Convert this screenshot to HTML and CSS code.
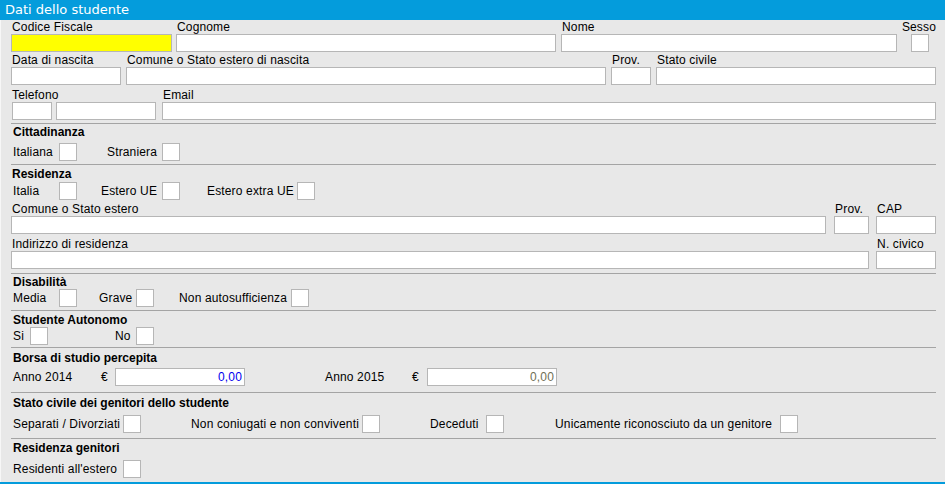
FILE: index.html
```html
<!DOCTYPE html>
<html lang="it">
<head>
<meta charset="utf-8">
<title>Dati dello studente</title>
<link rel="stylesheet" href="styles.css">
</head>
<body>
<div class="panel">
  <div class="header">Dati dello studente</div>
  <div class="body">
    <div class="top">
      <div class="fields r1">
        <div class="field w161"><span class="lbl">Codice Fiscale</span><input class="in yellow" type="text"></div>
        <div class="field w380 ml4"><span class="lbl">Cognome</span><input class="in" type="text"></div>
        <div class="field w336 ml5"><span class="lbl">Nome</span><input class="in" type="text"></div>
        <div class="field w35 ml4 sesso"><span class="lbl">Sesso</span><input class="in sq" type="text"></div>
      </div>
      <div class="fields r2">
        <div class="field w110"><span class="lbl">Data di nascita</span><input class="in" type="text"></div>
        <div class="field w480 ml5"><span class="lbl">Comune o Stato estero di nascita</span><input class="in" type="text"></div>
        <div class="field w40 ml5"><span class="lbl">Prov.</span><input class="in" type="text"></div>
        <div class="field w280 ml5"><span class="lbl">Stato civile</span><input class="in" type="text"></div>
      </div>
      <div class="fields r3">
        <div class="field tel">
          <span class="lbl nopad">Telefono</span>
          <div class="pair"><input class="in w40" type="text"><input class="in w100 ml4" type="text"></div>
        </div>
        <div class="field w775 ml6"><span class="lbl">Email</span><input class="in" type="text"></div>
      </div>
    </div>

    <section class="sec s-cit">
      <div class="h">Cittadinanza</div>
      <div class="opts g-cit">
        <span class="t">Italiana</span><input class="cb" type="checkbox">
        <span class="t">Straniera</span><input class="cb" type="checkbox">
      </div>
    </section>

    <section class="sec s-res">
      <div class="h h1">Residenza</div>
      <div class="opts g-res">
        <span class="t">Italia</span><input class="cb" type="checkbox">
        <span class="t">Estero UE</span><input class="cb" type="checkbox">
        <span class="t">Estero extra UE</span><input class="cb" type="checkbox">
      </div>
      <div class="fields r-com">
        <div class="field w816"><span class="lbl">Comune o Stato estero</span><input class="in" type="text"></div>
        <div class="field w35 ml8"><span class="lbl">Prov.</span><input class="in" type="text"></div>
        <div class="field w60 ml7"><span class="lbl">CAP</span><input class="in" type="text"></div>
      </div>
      <div class="fields r-ind">
        <div class="field w859"><span class="lbl">Indirizzo di residenza</span><input class="in" type="text"></div>
        <div class="field w60 ml7"><span class="lbl">N. civico</span><input class="in" type="text"></div>
      </div>
    </section>

    <section class="sec s-dis">
      <div class="h">Disabilità</div>
      <div class="opts g-dis">
        <span class="t">Media</span><input class="cb" type="checkbox">
        <span class="t">Grave</span><input class="cb" type="checkbox">
        <span class="t">Non autosufficienza</span><input class="cb" type="checkbox">
      </div>
    </section>

    <section class="sec s-aut">
      <div class="h">Studente Autonomo</div>
      <div class="opts g-aut">
        <span class="t">Si</span><input class="cb" type="checkbox">
        <span class="t">No</span><input class="cb" type="checkbox">
      </div>
    </section>

    <section class="sec s-bor">
      <div class="h">Borsa di studio percepita</div>
      <div class="opts g-bor">
        <span class="t">Anno 2014</span><span class="t">€</span><input class="in amount blue" type="text" value="0,00">
        <span class="t">Anno 2015</span><span class="t">€</span><input class="in amount olive" type="text" value="0,00">
      </div>
    </section>

    <section class="sec s-gen">
      <div class="h">Stato civile dei genitori dello studente</div>
      <div class="opts g-gen">
        <span class="t">Separati / Divorziati</span><input class="cb" type="checkbox">
        <span class="t">Non coniugati e non conviventi</span><input class="cb" type="checkbox">
        <span class="t">Deceduti</span><input class="cb" type="checkbox">
        <span class="t">Unicamente riconosciuto da un genitore</span><input class="cb" type="checkbox">
      </div>
    </section>

    <section class="sec s-rg">
      <div class="h">Residenza genitori</div>
      <div class="opts g-rg">
        <span class="t">Residenti all'estero</span><input class="cb" type="checkbox">
      </div>
    </section>
  </div>
</div>
</body>
</html>
```

FILE: styles.css
```css
* { box-sizing: border-box; }
html, body { margin: 0; padding: 0; background: #e8e8e8; }
body {
  font-family: "Liberation Sans", Arial, sans-serif;
  font-size: 12px;
  letter-spacing: 0.15px;
  color: #000;
}
.panel {
  width: 945px;
  height: 484px;
  background: #e8e8e8;
  border-bottom: 2px solid #049cdc;
  display: flex;
  flex-direction: column;
  overflow: hidden;
}
.header {
  height: 20px;
  line-height: 20px;
  background: #049cdc;
  color: #fff;
  font-family: "DejaVu Sans", sans-serif;
  font-size: 13px;
  letter-spacing: 0;
  padding-left: 5px;
  flex: none;
}
.body {
  flex: 1;
  border-left: 1px solid #f7f7f7;
  padding: 0 9px 0 10px;
}

/* text fields */
.fields { display: flex; align-items: flex-end; }
.field { display: flex; flex-direction: column; }
.lbl {
  height: 14px;
  line-height: 14px;
  padding-left: 1px;
  white-space: nowrap;
}
.lbl.nopad { padding-left: 0; }
.in {
  display: block;
  width: 100%;
  height: 18px;
  margin: 0;
  padding: 0 2px;
  border: 1px solid #b6b6b6;
  border-radius: 0;
  background: #fff;
  font: inherit;
  letter-spacing: inherit;
  outline: none;
}
.yellow { background: #ffff00; }
.sesso { align-items: flex-end; }
.sesso .lbl { padding-left: 0; }
.in.sq { width: 18px; margin-right: 7px; }
.pair { display: flex; }
.tel { margin-left: 1px; }

.r2 { margin-top: 1px; }
.r3 { margin-top: 3px; }

.w35 { width: 35px; }
.w40 { width: 40px; }
.w60 { width: 60px; }
.w100 { width: 100px; }
.w110 { width: 110px; }
.w161 { width: 161px; }
.w280 { width: 280px; }
.w336 { width: 336px; }
.w380 { width: 380px; }
.w480 { width: 480px; }
.w775 { width: 775px; }
.w816 { width: 816px; }
.w859 { width: 859px; }
.ml4 { margin-left: 4px; }
.ml5 { margin-left: 5px; }
.ml6 { margin-left: 6px; }
.ml7 { margin-left: 7px; }
.ml8 { margin-left: 8px; }

/* sections */
.top { padding-bottom: 3px; }
.sec {
  border-top: 1px solid #a4a4a4;
  width: 925px;
}
.h {
  font-weight: bold;
  height: 14px;
  line-height: 14px;
  padding-left: 2px;
  letter-spacing: 0;
}
.h.h1 { padding-left: 1px; }
.opts {
  display: grid;
  align-items: center;
  justify-items: start;
  padding-left: 2px;
  height: 18px;
}
.t { line-height: 14px; white-space: nowrap; }
.cb {
  -webkit-appearance: none;
  appearance: none;
  display: block;
  width: 18px;
  height: 18px;
  margin: 0;
  border: 1px solid #b6b6b6;
  border-radius: 0;
  background: #fff;
}

.s-cit .h { margin-top: 1px; }
.s-cit .opts { margin-top: 4px; }
.s-cit { padding-bottom: 3px; }
.g-cit { grid-template-columns: 46px 48px 55px 18px; }

.s-res .h { margin-top: 2px; }
.s-res .opts { margin-top: 1px; }
.g-res { grid-template-columns: 46px 42px 61px 45px 90px 18px; }
.r-com { margin-top: 2px; }
.r-ind { margin-top: 3px; }
.s-res { padding-bottom: 4px; }

.s-dis .h { margin-top: 1px; }
.s-dis { padding-bottom: 3px; }
.g-dis { grid-template-columns: 46px 40px 37px 43px 112px 18px; }

.s-aut .h { margin-top: 2px; }
.s-aut { padding-bottom: 2px; }
.g-aut { grid-template-columns: 17px 85px 21px 18px; }

.s-bor .h { margin-top: 3px; }
.s-bor .opts { margin-top: 3px; }
.s-bor { padding-bottom: 6px; }
.g-bor { grid-template-columns: 88px 14px 210px 87px 15px 130px; }
.amount { width: 130px; text-align: right; }
.blue { color: #0000ee; }
.olive { color: #6f6f55; }

.s-gen .h { margin-top: 3px; }
.s-gen .opts { margin-top: 5px; }
.s-gen { padding-bottom: 5px; }
.g-gen { grid-template-columns: 110px 68px 171px 68px 56px 69px 225px 18px; }

.s-rg .h { margin-top: 2px; }
.s-rg .opts { margin-top: 5px; }
.g-rg { grid-template-columns: 110px 18px; }
```
